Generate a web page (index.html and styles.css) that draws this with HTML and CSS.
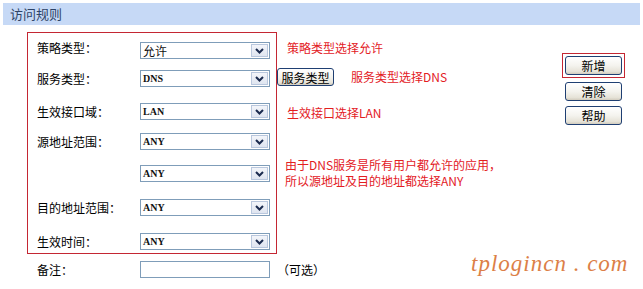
FILE: index.html
```html
<!DOCTYPE html>
<html lang="zh">
<head>
<meta charset="utf-8">
<title>访问规则</title>
<link rel="stylesheet" href="styles.css">
</head>
<body>
<div class="page">
  <div class="title-bar">访问规则</div>
  <div class="content">
    <div class="form-col">
      <div class="rules">
        <span class="label label-up">策略类型：</span>
        <div class="select"><span class="val cjk">允许</span><span class="arrow"><svg width="9" height="6" viewBox="0 0 9 6"><path d="M1 1 L4.5 4.5 L8 1" fill="none" stroke="#1b2b4f" stroke-width="2"/></svg></span></div>

        <span class="label">服务类型：</span>
        <div class="select"><span class="val">DNS</span><span class="arrow"><svg width="9" height="6" viewBox="0 0 9 6"><path d="M1 1 L4.5 4.5 L8 1" fill="none" stroke="#1b2b4f" stroke-width="2"/></svg></span></div>

        <span class="label">生效接口域：</span>
        <div class="select"><span class="val">LAN</span><span class="arrow"><svg width="9" height="6" viewBox="0 0 9 6"><path d="M1 1 L4.5 4.5 L8 1" fill="none" stroke="#1b2b4f" stroke-width="2"/></svg></span></div>

        <span class="label">源地址范围：</span>
        <div class="select"><span class="val">ANY</span><span class="arrow"><svg width="9" height="6" viewBox="0 0 9 6"><path d="M1 1 L4.5 4.5 L8 1" fill="none" stroke="#1b2b4f" stroke-width="2"/></svg></span></div>

        <span class="label"></span>
        <div class="select"><span class="val">ANY</span><span class="arrow"><svg width="9" height="6" viewBox="0 0 9 6"><path d="M1 1 L4.5 4.5 L8 1" fill="none" stroke="#1b2b4f" stroke-width="2"/></svg></span></div>

        <span class="label">目的地址范围：</span>
        <div class="select"><span class="val">ANY</span><span class="arrow"><svg width="9" height="6" viewBox="0 0 9 6"><path d="M1 1 L4.5 4.5 L8 1" fill="none" stroke="#1b2b4f" stroke-width="2"/></svg></span></div>

        <span class="label">生效时间：</span>
        <div class="select"><span class="val">ANY</span><span class="arrow"><svg width="9" height="6" viewBox="0 0 9 6"><path d="M1 1 L4.5 4.5 L8 1" fill="none" stroke="#1b2b4f" stroke-width="2"/></svg></span></div>
      </div>
      <div class="remark">
        <span class="label">备注：</span>
        <div class="text-input"></div>
        <span class="optional">（可选）</span>
      </div>
    </div>

    <div class="notes">
      <div class="note note-1">策略类型选择允许</div>
      <div class="service-row">
        <button class="btn btn-service">服务类型</button>
        <span class="note">服务类型选择DNS</span>
      </div>
      <div class="note note-3">生效接口选择LAN</div>
      <div class="note note-long">由于DNS服务是所有用户都允许的应用，<br>所以源地址及目的地址都选择ANY</div>
    </div>

    <div class="actions">
      <div class="highlight"><button class="btn btn-action">新增</button></div>
      <button class="btn btn-action">清除</button>
      <button class="btn btn-action btn-help">帮助</button>
    </div>
  </div>
  <div class="watermark">tplogincn . com</div>
</div>
</body>
</html>
```

FILE: styles.css
```css
* {
  box-sizing: border-box;
}

html, body {
  margin: 0;
  padding: 0;
  background: #ffffff;
}

body {
  font-family: "Noto Sans CJK SC", "Noto Sans", sans-serif;
  font-size: 12px;
  color: #000;
}

.page {
  position: relative;
  width: 643px;
  height: 289px;
  overflow: hidden;
}

.title-bar {
  margin: 3px 3px 0;
  height: 22px;
  line-height: 22px;
  padding-left: 7px;
  background: #c6d9f6;
  color: #2e4466;
  font-size: 13px;
}

.content {
  display: flex;
  align-items: flex-start;
  margin-top: 7px;
  padding-left: 27px;
}

.form-col {
  width: 250px;
  flex: none;
}

.rules {
  display: grid;
  grid-template-columns: 103px 130px;
  grid-template-rows: 28px 33px 30px 32px 34px 34px 20px;
  padding: 9px 0 0 9px;
  border: 1px solid #c42733;
  height: 222px;
}

.label {
  line-height: 17px;
  font-size: 12px;
  white-space: nowrap;
}

.label-up {
  margin-top: -3px;
}

.select {
  display: flex;
  align-items: center;
  justify-content: space-between;
  width: 130px;
  height: 17px;
  border: 1px solid #7f9db9;
  background: #fff;
  padding: 0 1px 0 2px;
}

.val {
  font-family: "Liberation Serif", serif;
  font-size: 10px;
  font-weight: bold;
  color: #111;
  line-height: 15px;
}

.val.cjk {
  font-family: "Noto Sans CJK SC", sans-serif;
  font-size: 12px;
  font-weight: normal;
}

.arrow {
  display: flex;
  align-items: center;
  justify-content: center;
  width: 17px;
  height: 13px;
  border: 1px solid #b9c7dd;
  background: linear-gradient(#f3f5fa, #dfe5f0);
}

.remark {
  display: flex;
  align-items: center;
  margin-top: 7px;
  padding-left: 10px;
  white-space: nowrap;
}

.remark .label {
  flex: none;
  width: 103px;
}

.text-input {
  width: 130px;
  height: 17px;
  border: 1px solid #7f9db9;
  background: #fff;
  flex: none;
}

.optional {
  flex: none;
  margin-left: 7px;
  font-size: 12px;
}

.notes {
  flex: 1;
  color: #e3201f;
  font-size: 12px;
  line-height: 16px;
  white-space: nowrap;
}

.note-1 {
  margin: 8px 0 0 10px;
}

.service-row {
  display: flex;
  align-items: center;
  margin-top: 12px;
}

.service-row .note {
  margin-left: 17px;
}

.note-3 {
  margin: 19px 0 0 10px;
}

.note-long {
  margin: 36px 0 0 8px;
}

.btn {
  font-family: "Noto Sans CJK SC", sans-serif;
  font-size: 12px;
  color: #000;
  padding: 0;
  border: 1px solid #1f3f72;
  border-radius: 3px;
  background: linear-gradient(#ffffff 0%, #f4f3ee 50%, #e6e3d8 85%, #d2ccbe 100%);
  line-height: 15px;
}

.btn-service {
  width: 57px;
  height: 18px;
}

.actions {
  display: flex;
  flex-direction: column;
  align-items: center;
  gap: 4px;
  margin: 21px 18px 0 0;
}

.highlight {
  border: 1px solid #c42733;
  padding: 2px;
  width: 63px;
}

.btn-action {
  display: block;
  width: 57px;
  height: 19px;
}

.btn-help {
  margin-top: 1px;
}

.watermark {
  position: absolute;
  left: 471px;
  top: 251px;
  font-family: "Liberation Serif", serif;
  font-style: italic;
  font-size: 23px;
  letter-spacing: 1px;
  color: #dc7f47;
}
```
